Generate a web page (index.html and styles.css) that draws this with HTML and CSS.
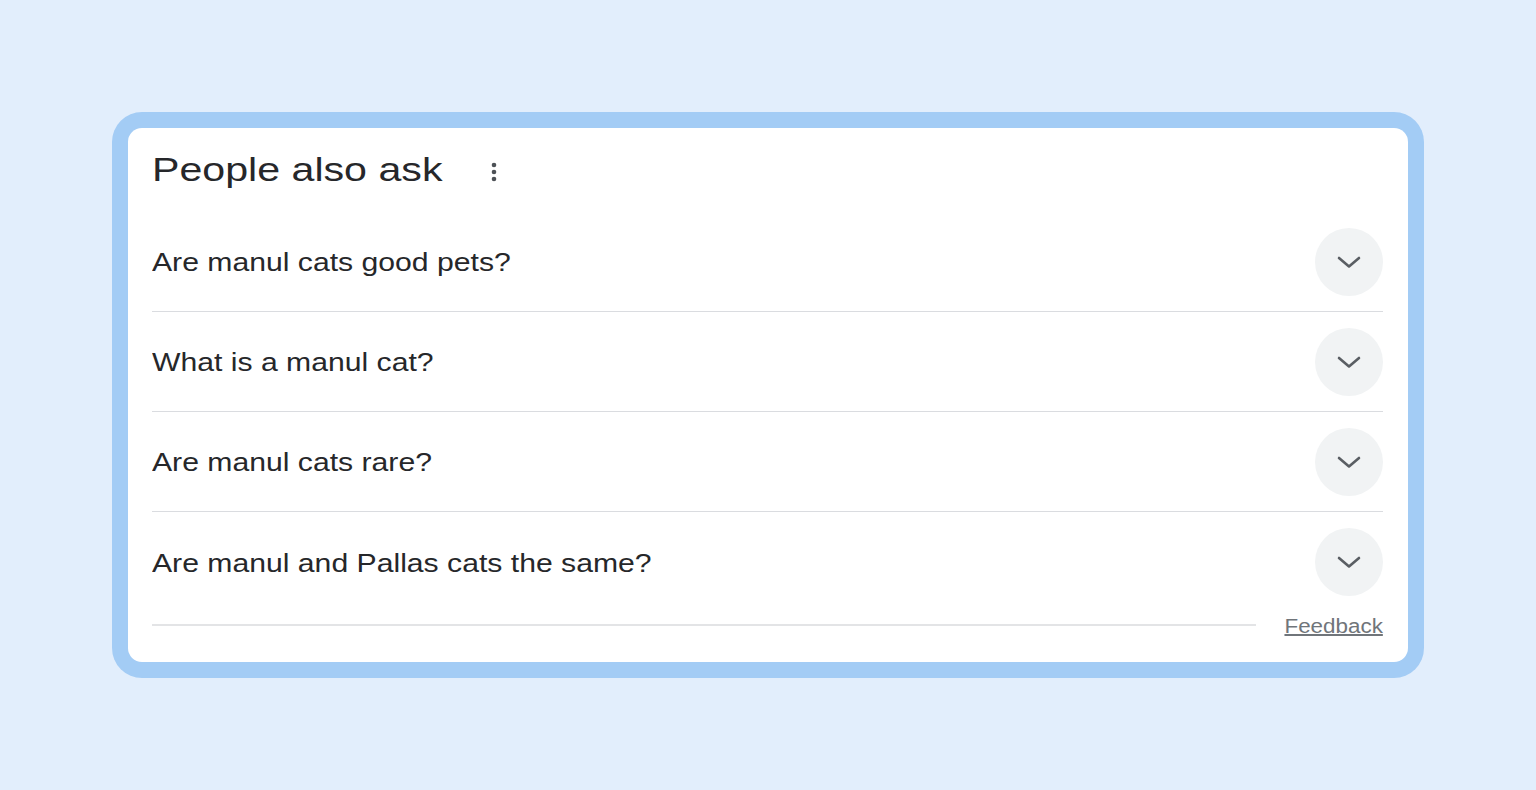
FILE: index.html
```html
<!DOCTYPE html>
<html lang="en">
<head>
<meta charset="utf-8">
<title>People also ask</title>
<link rel="stylesheet" href="styles.css">
</head>
<body>
<div class="frame">
  <div class="card">
    <div class="head">
      <h2 class="title"><span class="stretch">People also ask</span></h2>
      <svg class="dots" width="6" height="20" viewBox="0 0 6 20" aria-hidden="true">
        <circle cx="3" cy="3" r="2.3"/>
        <circle cx="3" cy="10" r="2.3"/>
        <circle cx="3" cy="17" r="2.3"/>
      </svg>
    </div>
    <div class="q">
      <span class="qtext"><span class="stretch">Are manul cats good pets?</span></span>
      <span class="toggle"><svg width="26" height="14" viewBox="0 0 26 14"><path d="M3 3 L13 11.5 L23 3"/></svg></span>
    </div>
    <div class="q">
      <span class="qtext"><span class="stretch">What is a manul cat?</span></span>
      <span class="toggle"><svg width="26" height="14" viewBox="0 0 26 14"><path d="M3 3 L13 11.5 L23 3"/></svg></span>
    </div>
    <div class="q">
      <span class="qtext"><span class="stretch">Are manul cats rare?</span></span>
      <span class="toggle"><svg width="26" height="14" viewBox="0 0 26 14"><path d="M3 3 L13 11.5 L23 3"/></svg></span>
    </div>
    <div class="q last">
      <span class="qtext"><span class="stretch">Are manul and Pallas cats the same?</span></span>
      <span class="toggle"><svg width="26" height="14" viewBox="0 0 26 14"><path d="M3 3 L13 11.5 L23 3"/></svg></span>
    </div>
    <div class="foot">
      <div class="rule"></div>
      <a class="feedback" href="#">Feedback</a>
    </div>
  </div>
</div>
</body>
</html>
```

FILE: styles.css
```css
html, body {
  margin: 0;
  padding: 0;
}
body {
  background: #e2eefc;
  width: 1536px;
  height: 790px;
  padding: 112px 0 0 112px;
  box-sizing: border-box;
  font-family: "Liberation Sans", Arial, sans-serif;
  color: #202124;
}
.frame {
  width: 1312px;
  height: 566px;
  box-sizing: border-box;
  padding: 16px;
  background: #a3ccf5;
  border-radius: 30px;
}
.card {
  background: #fff;
  border-radius: 14px;
  height: 100%;
  box-sizing: border-box;
  padding: 0 25px 0 24px;
  display: flex;
  flex-direction: column;
}
.stretch {
  display: inline-block;
  transform-origin: left center;
}
.head {
  height: 84px;
  box-sizing: border-box;
  padding-top: 22px;
  display: flex;
  align-items: flex-start;
}
.title {
  margin: 0;
  font-size: 34px;
  font-weight: 400;
  line-height: 39px;
  color: #26272a;
}
.title .stretch {
  transform: scaleX(1.21);
}
.dots {
  margin: 12px 0 0 99px;
  fill: #4d5156;
}
.q {
  height: 100px;
  box-sizing: border-box;
  border-bottom: 1px solid #dadce0;
  display: flex;
  align-items: center;
  justify-content: space-between;
}
.q.last {
  border-bottom: none;
}
.qtext {
  font-size: 26px;
  line-height: 30px;
  margin-top: 1px;
  color: #26272a;
}
.qtext .stretch {
  transform: scaleX(1.16);
}
.toggle {
  width: 68px;
  height: 68px;
  border-radius: 50%;
  background: #f1f3f4;
  display: flex;
  align-items: center;
  justify-content: center;
}
.toggle svg {
  fill: none;
  stroke: #5a5e63;
  stroke-width: 2.6;
  stroke-linecap: round;
  stroke-linejoin: round;
}
.foot {
  height: 26px;
  display: flex;
  align-items: center;
}
.rule {
  flex: 1;
  height: 2px;
  background: #e3e4e6;
  margin-right: 39px;
}
.feedback {
  display: inline-block;
  font-size: 20px;
  line-height: 24px;
  margin-top: 2px;
  color: #70757a;
  text-decoration: underline;
  transform: scaleX(1.12);
  transform-origin: right center;
}
```
